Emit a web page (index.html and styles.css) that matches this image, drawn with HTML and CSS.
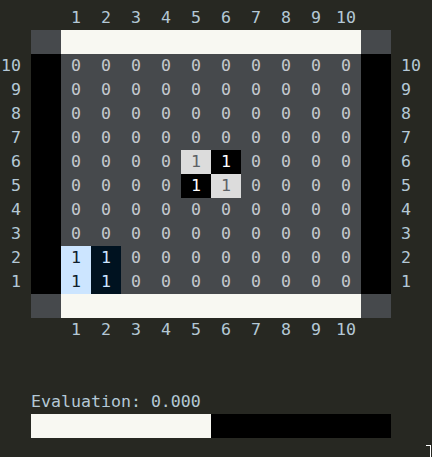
FILE: index.html
```html
<!DOCTYPE html>
<html>
<head>
<meta charset="utf-8">
<link rel="stylesheet" href="styles.css">
</head>
<body>
<div class="screen">
  <div class="board">
    <div class="lbl"></div><div class="lbl"></div>
    <div class="lbl c">1</div><div class="lbl c">2</div><div class="lbl c">3</div><div class="lbl c">4</div><div class="lbl c">5</div><div class="lbl c">6</div><div class="lbl c">7</div><div class="lbl c">8</div><div class="lbl c">9</div><div class="lbl c">10</div>
    <div class="lbl"></div><div class="lbl"></div>

    <div class="lbl"></div><div class="corner"></div><div class="edge-h"></div><div class="corner"></div><div class="lbl"></div>

    <div class="rl">10</div><div class="side"></div>
    <div class="cell">0</div><div class="cell">0</div><div class="cell">0</div><div class="cell">0</div><div class="cell">0</div><div class="cell">0</div><div class="cell">0</div><div class="cell">0</div><div class="cell">0</div><div class="cell">0</div>
    <div class="side"></div><div class="rr">10</div>

    <div class="rl">9</div><div class="side"></div>
    <div class="cell">0</div><div class="cell">0</div><div class="cell">0</div><div class="cell">0</div><div class="cell">0</div><div class="cell">0</div><div class="cell">0</div><div class="cell">0</div><div class="cell">0</div><div class="cell">0</div>
    <div class="side"></div><div class="rr">9</div>

    <div class="rl">8</div><div class="side"></div>
    <div class="cell">0</div><div class="cell">0</div><div class="cell">0</div><div class="cell">0</div><div class="cell">0</div><div class="cell">0</div><div class="cell">0</div><div class="cell">0</div><div class="cell">0</div><div class="cell">0</div>
    <div class="side"></div><div class="rr">8</div>

    <div class="rl">7</div><div class="side"></div>
    <div class="cell">0</div><div class="cell">0</div><div class="cell">0</div><div class="cell">0</div><div class="cell">0</div><div class="cell">0</div><div class="cell">0</div><div class="cell">0</div><div class="cell">0</div><div class="cell">0</div>
    <div class="side"></div><div class="rr">7</div>

    <div class="rl">6</div><div class="side"></div>
    <div class="cell">0</div><div class="cell">0</div><div class="cell">0</div><div class="cell">0</div><div class="cell light">1</div><div class="cell dark">1</div><div class="cell">0</div><div class="cell">0</div><div class="cell">0</div><div class="cell">0</div>
    <div class="side"></div><div class="rr">6</div>

    <div class="rl">5</div><div class="side"></div>
    <div class="cell">0</div><div class="cell">0</div><div class="cell">0</div><div class="cell">0</div><div class="cell dark">1</div><div class="cell light">1</div><div class="cell">0</div><div class="cell">0</div><div class="cell">0</div><div class="cell">0</div>
    <div class="side"></div><div class="rr">5</div>

    <div class="rl">4</div><div class="side"></div>
    <div class="cell">0</div><div class="cell">0</div><div class="cell">0</div><div class="cell">0</div><div class="cell">0</div><div class="cell">0</div><div class="cell">0</div><div class="cell">0</div><div class="cell">0</div><div class="cell">0</div>
    <div class="side"></div><div class="rr">4</div>

    <div class="rl">3</div><div class="side"></div>
    <div class="cell">0</div><div class="cell">0</div><div class="cell">0</div><div class="cell">0</div><div class="cell">0</div><div class="cell">0</div><div class="cell">0</div><div class="cell">0</div><div class="cell">0</div><div class="cell">0</div>
    <div class="side"></div><div class="rr">3</div>

    <div class="rl">2</div><div class="side"></div>
    <div class="cell sky">1</div><div class="cell navy">1</div><div class="cell">0</div><div class="cell">0</div><div class="cell">0</div><div class="cell">0</div><div class="cell">0</div><div class="cell">0</div><div class="cell">0</div><div class="cell">0</div>
    <div class="side"></div><div class="rr">2</div>

    <div class="rl">1</div><div class="side"></div>
    <div class="cell sky">1</div><div class="cell navy">1</div><div class="cell">0</div><div class="cell">0</div><div class="cell">0</div><div class="cell">0</div><div class="cell">0</div><div class="cell">0</div><div class="cell">0</div><div class="cell">0</div>
    <div class="side"></div><div class="rr">1</div>

    <div class="lbl"></div><div class="corner"></div><div class="edge-h"></div><div class="corner"></div><div class="lbl"></div>

    <div class="lbl"></div><div class="lbl"></div>
    <div class="lbl c">1</div><div class="lbl c">2</div><div class="lbl c">3</div><div class="lbl c">4</div><div class="lbl c">5</div><div class="lbl c">6</div><div class="lbl c">7</div><div class="lbl c">8</div><div class="lbl c">9</div><div class="lbl c">10</div>
    <div class="lbl"></div><div class="lbl"></div>
  </div>

  <div class="eval">
    <div class="eval-text">Evaluation: 0.000</div>
    <div class="eval-bar"><div class="eval-fill" style="width:50%"></div></div>
  </div>
</div>
<span class="cursor"></span>
</body>
</html>
```

FILE: styles.css
```css
html, body {
  margin: 0;
  padding: 0;
  background: #272822;
  width: 432px;
  height: 457px;
  overflow: hidden;
}

.screen {
  font-family: "DejaVu Sans Mono", "Liberation Mono", monospace;
  font-size: 16.6px;
  line-height: 24px;
  color: #bccad4;
  padding-top: 6px;
}

.board {
  display: grid;
  grid-template-columns: 31px 30px repeat(10, 30px) 30px 41px;
  grid-auto-rows: 24px;
}

.lbl {
  height: 24px;
}

.lbl.c {
  text-align: center;
  color: #b4c8d6;
}

.corner {
  background: #46494c;
}

.edge-h {
  grid-column: span 10;
  background: #f8f8f2;
}

.side {
  background: #000000;
}

.rl {
  text-align: right;
  padding-right: 10px;
  color: #b4c8d6;
}

.rr {
  padding-left: 10px;
  color: #b4c8d6;
}

.cell {
  background: #46494c;
  text-align: center;
  color: #c4cacf;
}

.cell.light {
  background: #dcdcdc;
  color: #5c6166;
}

.cell.dark {
  background: #000000;
  color: #ffffff;
}

.cell.sky {
  background: #cce5ff;
  color: #10202e;
}

.cell.navy {
  background: #001220;
  color: #cce5ff;
}

.eval {
  margin-top: 48px;
  padding-left: 31px;
}

.eval-text {
  color: #b4c8d6;
  height: 24px;
}

.eval-bar {
  width: 360px;
  height: 24px;
  background: #000000;
  display: flex;
}

.eval-fill {
  background: #f8f8f2;
  height: 100%;
}

.cursor {
  position: absolute;
  left: 426px;
  top: 445px;
  width: 4px;
  height: 12px;
  border-top: 1px solid #ffffff;
  border-right: 1px solid #ffffff;
}
```
